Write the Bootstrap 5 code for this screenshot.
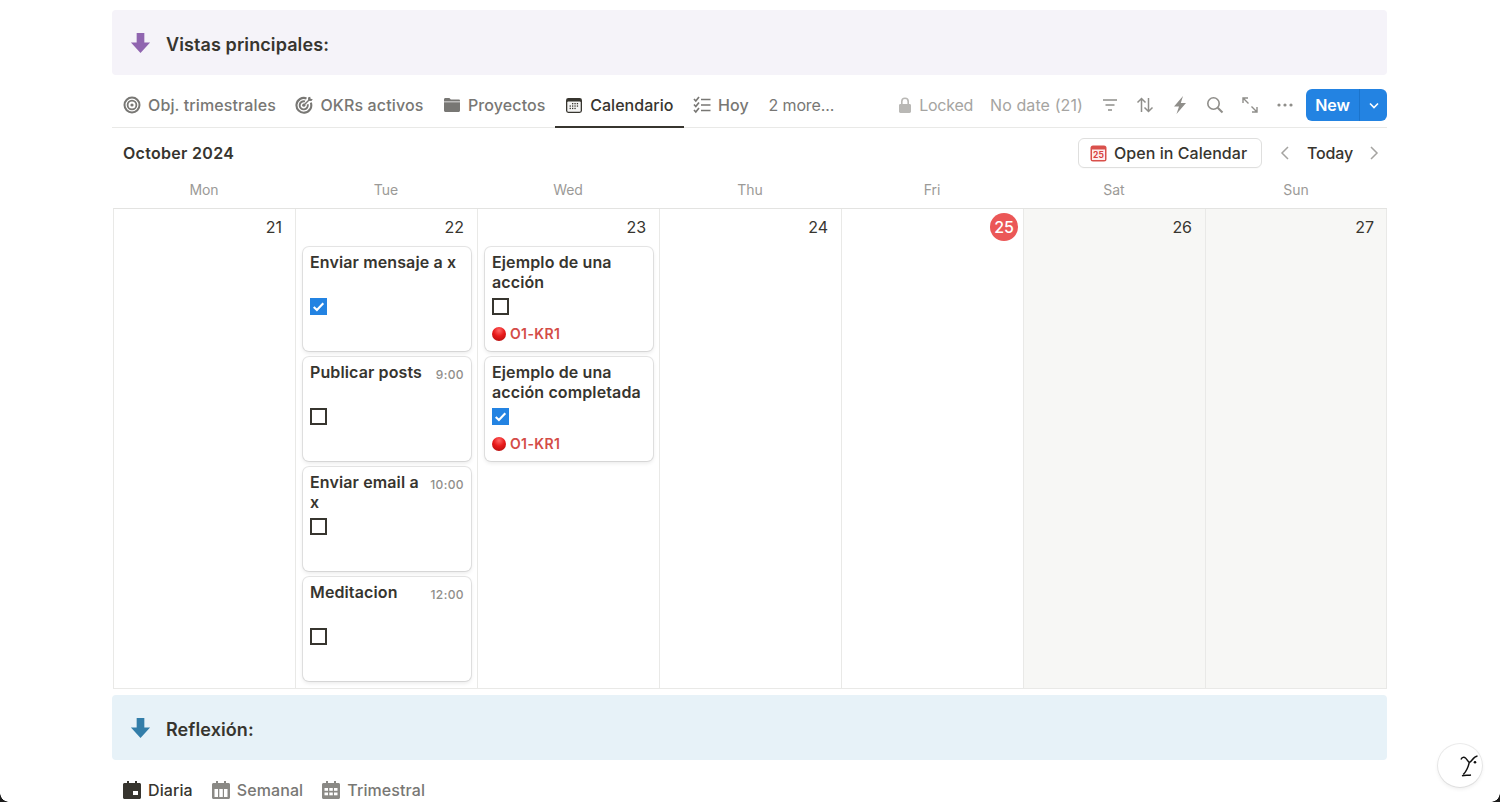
<!DOCTYPE html>
<html lang="es">
<head>
<meta charset="utf-8">
<title>Calendario</title>
<link href="https://cdn.jsdelivr.net/npm/bootstrap@5.3.0/dist/css/bootstrap.min.css" rel="stylesheet">
<style>
html,body{height:802px;overflow:hidden;background:#fff}
body{font-family:Inter,"Liberation Sans",sans-serif;color:#37352f;font-size:16px;letter-spacing:-.05px}
.page-wrap{width:1275px;margin-left:112px;padding-top:10px}
.callout-box{height:65px;border-radius:4px;padding-left:17px;font-size:18px;font-weight:600;gap:14px;letter-spacing:.1px}
.callout-box span{padding-top:3px}
.callout-purple{background:#f5f3f9}
.callout-blue{background:#e7f2f8;margin-top:6px}
.callout-box svg{width:23px;height:23px;flex:none}
.tabs-bar{height:53px;border-bottom:1px solid #e9e9e7;padding-left:11px}
.tab-item{height:45px;color:#787774;font-weight:500;gap:7px;font-size:16px;white-space:nowrap;margin-top:8px;padding-bottom:2px;letter-spacing:.12px}
.tab-item.sel{color:#37352f;box-shadow:inset 0 -2px 0 #37352f;margin-left:-10px;padding:0 10px 2px;margin-right:-10px;letter-spacing:.05px}
.tabs-left{gap:19.500px}
.tab-more{letter-spacing:-.1px}
.tab-item svg{width:18px;height:18px;flex:none}
.tools{gap:0;color:#a5a4a1;margin-top:8px}
.tools svg{width:18px;height:18px}
.tool-text{font-size:16px;font-weight:400;color:#a5a4a1;white-space:nowrap}
.new-group{width:81px;height:32px;background:#2383e2;border-radius:6px;color:#fff;font-weight:600;font-size:16px}
.new-main{width:54px;height:32px;border-right:1px solid #1b74cc}
.new-caret{width:27px}
.month-row{height:50px;padding-left:11px;padding-right:4px}
.month-title{font-size:16px;font-weight:600;letter-spacing:.3px}
.open-cal{height:30px;width:184px;border:1px solid #dfdfde;border-radius:6px;font-size:16px;font-weight:500;gap:7px;color:#37352f;background:#fff;box-shadow:0 1px 1px rgba(0,0,0,.02);letter-spacing:.05px;padding-left:11px}
.today-nav{margin-left:14px;gap:0}
.today-label{font-size:16px;font-weight:500;margin:0 12px 0 13px;letter-spacing:-.15px}
.week-row{display:grid;grid-template-columns:repeat(7,182px);padding-left:1px}
.day-row{display:grid;grid-template-columns:repeat(6,182px) 181px}
.week-name{height:30px;font-size:14px;color:#9b9a97;text-align:center;line-height:24px;width:182px}
.day-row{border-top:1px solid #e3e3e1;border-bottom:1px solid #e9e9e7;border-left:1px solid #e9e9e7;height:481px;width:1274px;margin-left:1px}
.day-col{border-right:1px solid #e9e9e7;padding:0 6px;min-width:0}
.day-col.weekend{background:#f7f7f5}
.day-num{height:38px;text-align:right;font-size:16px;line-height:37px;padding-right:7px;font-weight:400}
.day-col:last-child .day-num{padding-right:6px}
.day-today{background:#eb5757;color:#fff;border-radius:50%;width:28px;height:28px;line-height:28px;text-align:center;font-size:16px;font-weight:500;margin:4px 0 6px auto;display:block;padding:0;transform:translateX(1px)}
.today-cell{height:38px}
.task-card{height:104px;background:#fff;border-radius:6px;margin-bottom:6px;padding:5px 7px;box-shadow:0 0 0 1px rgba(15,15,15,.1),0 2px 4px rgba(15,15,15,.1);width:168px;margin-left:1px}
.task-head{height:40px;gap:6px}
.task-name{font-size:16px;font-weight:600;line-height:20px;letter-spacing:.12px}
.task-time{font-size:12px;font-weight:500;color:#8f8e8a;line-height:25px;margin-left:auto;white-space:nowrap;letter-spacing:.4px}
.check-box{width:17px;height:17px;border:2px solid #37352f;display:block;margin-top:6px;background:#fff}
.check-on{border:0;background:#2383e2}
.check-on svg{display:block;width:17px;height:17px}
.kr-tag{color:#d44c47;font-size:14px;font-weight:600;gap:4px;margin-top:9px;line-height:20px;letter-spacing:.35px}
.red-ball{width:14px;height:14px;border-radius:50%;background:radial-gradient(circle at 50% 25%,#f66 0,#e81a1a 45%,#a80e0e 100%);flex:none}
.bottom-tabs{padding-left:11px;gap:19px;margin-top:10px}
.bottom-tab{color:#787774;font-weight:500;gap:7px;font-size:16px;height:40px;letter-spacing:.1px}
.bottom-tab.sel{color:#37352f}
.bottom-tab svg{width:18px;height:18px}
.fab-help{position:fixed;left:1438px;top:744px;width:44px;height:43px;border-radius:50%;background:#fff;box-shadow:0 0 0 1px rgba(15,15,15,.08),0 2px 4px rgba(15,15,15,.08);padding-left:22px}
.corner-l,.corner-r{position:fixed;bottom:0;width:9px;height:9px}
.corner-l{left:0;background:radial-gradient(circle at 100% 0,transparent 8.500px,#1c1c1c 9px)}
.corner-r{right:0;background:radial-gradient(circle at 0 0,transparent 8.500px,#1c1c1c 9px)}
</style>
</head>
<body>
<div class="page-wrap">
  <div class="callout-box callout-purple d-flex align-items-center">
    <svg viewBox="0 0 24 24"><path fill="#9065b0" d="M8 2h8v10h6L12 23 2 12h6z"/></svg>
    <span>Vistas principales:</span>
  </div>

  <div class="tabs-bar d-flex justify-content-between">
    <div class="tabs-left d-flex">
      <div class="tab-item d-flex align-items-center"><svg viewBox="0 0 18 18" fill="none" stroke="#787774"><circle cx="9" cy="9" r="7.500" stroke-width="2"/><circle cx="9" cy="9" r="4.400" stroke-width="1.800"/><circle cx="9" cy="9" r="1.600" fill="#787774" stroke="none"/></svg>Obj. trimestrales</div>
      <div class="tab-item d-flex align-items-center"><svg viewBox="0 0 18 18" fill="none" stroke="#787774"><path d="M11.500 2.400A7.400 7.400 0 1 0 15.800 6.700" stroke-width="2.100"/><path d="M10 5.400A4.100 4.100 0 1 0 12.700 8.200" stroke-width="1.900"/><circle cx="8.800" cy="9.200" r="1.600" fill="#787774" stroke="none"/><path d="M9 9l6-6" stroke-width="1.500"/><path d="M13 1.600l.2 3.200 3.200.2 1.400-1.800-2.200-.4-.4-2z" fill="#787774" stroke="none"/></svg>OKRs activos</div>
      <div class="tab-item d-flex align-items-center"><svg viewBox="0 0 18 18" fill="#787774"><path d="M1 3.500C1 2.700 1.600 2 2.400 2h4l1.400 1.600H15.800c.7 0 1.200.5 1.200 1.200V5.400H1z"/><path d="M1 6.300h16v8.200c0 .9-.7 1.500-1.500 1.500h-13C1.700 16 1 15.400 1 14.500z"/></svg>Proyectos</div>
      <div class="tab-item sel d-flex align-items-center"><svg viewBox="0 0 18 18"><rect x="1" y="2" width="16" height="15" rx="2.400" fill="#37352f"/><rect x="2.300" y="5.400" width="13.400" height="10.300" rx="1" fill="#f4f4f3"/><g fill="#37352f"><rect x="7" y="7" width="1.300" height="1.300"/><rect x="9.400" y="7" width="1.300" height="1.300"/><rect x="11.800" y="7" width="1.300" height="1.300"/><rect x="4.600" y="9.400" width="1.300" height="1.300"/><rect x="7" y="9.400" width="1.300" height="1.300"/><rect x="9.400" y="9.400" width="1.300" height="1.300"/><rect x="11.800" y="9.400" width="1.300" height="1.300"/><rect x="4.600" y="11.800" width="1.300" height="1.300"/><rect x="7" y="11.800" width="1.300" height="1.300"/><rect x="9.400" y="11.800" width="1.300" height="1.300"/></g></svg>Calendario</div>
      <div class="tab-item d-flex align-items-center"><svg viewBox="0 0 18 18" fill="none" stroke="#787774" stroke-width="1.700"><path d="M1 3l1.800 2L6 1M1 8.500l1.800 2L6 6.500M1 14l1.800 2L6 12"/><path d="M8 3.500h9.500M8 9h9.500M8 14.500h9.500"/></svg>Hoy</div>
      <div class="tab-item tab-more d-flex align-items-center fw-normal">2 more...</div>
    </div>
    <div class="tools d-flex align-items-center">
      <svg style="width:14px;height:16px;margin-right:7px" viewBox="0 0 14 16"><path fill="#b9b8b5" d="M3 7V4.500a4 4 0 0 1 8 0V7h.600c.800 0 1.400.600 1.400 1.400v6.200c0 .800-.600 1.400-1.400 1.400H2.400C1.600 16 1 15.400 1 14.600V8.400C1 7.600 1.600 7 2.400 7zm1.600 0h4.800V4.500a2.400 2.400 0 0 0-4.800 0z"/></svg>
      <span class="tool-text" style="margin-right:17px;letter-spacing:-.25px">Locked</span>
      <span class="tool-text" style="margin-right:18px;letter-spacing:.1px">No date (21)</span>
      <svg style="margin-right:17px" viewBox="0 0 18 18" fill="none" stroke="#8f8e8a" stroke-width="1.500"><path d="M2 4h14M4.500 9h9M7 14h4"/></svg>
      <svg style="margin-right:17px" viewBox="0 0 18 18" fill="none" stroke="#8f8e8a" stroke-width="1.500"><path d="M5.500 16V2.500M1.500 6.500l4-4 4 4M12.500 2v13.500M8.500 11.500l4 4 4-4"/></svg>
      <svg style="margin-right:17px" viewBox="0 0 18 18"><path fill="#8f8e8a" d="M12 0L3 10.500h5L5.500 18l9.500-11H9.800z"/></svg>
      <svg style="margin-right:17px" viewBox="0 0 18 18" fill="none" stroke="#8f8e8a" stroke-width="1.600"><circle cx="7.500" cy="7.500" r="5.700"/><path d="M11.700 11.700L16.500 16.500" stroke-width="2"/></svg>
      <svg style="margin-right:17px" viewBox="0 0 18 18" fill="none" stroke="#8f8e8a" stroke-width="1.400"><path d="M2 2l5.500 5.500M2 7V2h5M16 16l-5.500-5.500M16 11v5h-5"/></svg>
      <svg style="margin-right:12px" viewBox="0 0 18 18"><g fill="#8f8e8a"><circle cx="3" cy="9" r="1.600"/><circle cx="9" cy="9" r="1.600"/><circle cx="15" cy="9" r="1.600"/></g></svg>
      <div class="new-group d-flex align-items-center">
        <div class="new-main d-flex align-items-center justify-content-center">New</div>
        <div class="new-caret d-flex align-items-center justify-content-center"><svg style="width:12px;height:12px" viewBox="0 0 12 12" fill="none" stroke="#fff" stroke-width="1.600"><path d="M2 4.500l4 4 4-4"/></svg></div>
      </div>
    </div>
  </div>

  <div class="month-row d-flex align-items-center justify-content-between">
    <div class="month-title">October 2024</div>
    <div class="d-flex align-items-center">
      <div class="open-cal d-flex align-items-center">
        <svg width="17" height="17" viewBox="0 0 17 17"><rect x=".5" y=".5" width="16" height="16" rx="2.500" fill="#d9504b"/><rect x="2" y="4.500" width="13" height="10.500" fill="#fdeeed"/><text x="8.500" y="13" font-family="Inter,sans-serif" font-size="8.500" font-weight="700" fill="#d9443f" text-anchor="middle">25</text></svg>
        Open in Calendar
      </div>
      <div class="today-nav d-flex align-items-center">
        <svg width="18" height="18" viewBox="0 0 18 18" fill="none" stroke="#a5a4a1" stroke-width="1.500"><path d="M12 3L6 9l6 6"/></svg>
        <span class="today-label">Today</span>
        <svg width="18" height="18" viewBox="0 0 18 18" fill="none" stroke="#a5a4a1" stroke-width="1.500"><path d="M6 3l6 6-6 6"/></svg>
      </div>
    </div>
  </div>

  <div class="week-row">
    <div class="week-name">Mon</div><div class="week-name">Tue</div><div class="week-name">Wed</div><div class="week-name">Thu</div><div class="week-name">Fri</div><div class="week-name">Sat</div><div class="week-name">Sun</div>
  </div>

  <div class="day-row">
    <div class="day-col"><div class="day-num">21</div></div>
    <div class="day-col">
      <div class="day-num">22</div>
      <div class="task-card">
        <div class="task-head d-flex"><div class="task-name">Enviar mensaje a x</div></div>
        <span class="check-box check-on"><svg viewBox="0 0 16 16" fill="none" stroke="#fff" stroke-width="2"><path d="M3.500 8.500l3 2.800 6-6.300"/></svg></span>
      </div>
      <div class="task-card">
        <div class="task-head d-flex"><div class="task-name">Publicar posts</div><div class="task-time">9:00</div></div>
        <span class="check-box"></span>
      </div>
      <div class="task-card">
        <div class="task-head d-flex"><div class="task-name">Enviar email a x</div><div class="task-time">10:00</div></div>
        <span class="check-box"></span>
      </div>
      <div class="task-card">
        <div class="task-head d-flex"><div class="task-name">Meditacion</div><div class="task-time">12:00</div></div>
        <span class="check-box"></span>
      </div>
    </div>
    <div class="day-col">
      <div class="day-num">23</div>
      <div class="task-card">
        <div class="task-head d-flex"><div class="task-name">Ejemplo de una acción</div></div>
        <span class="check-box"></span>
        <div class="kr-tag d-flex align-items-center"><span class="red-ball"></span>O1-KR1</div>
      </div>
      <div class="task-card">
        <div class="task-head d-flex"><div class="task-name">Ejemplo de una acción completada</div></div>
        <span class="check-box check-on"><svg viewBox="0 0 16 16" fill="none" stroke="#fff" stroke-width="2"><path d="M3.500 8.500l3 2.800 6-6.300"/></svg></span>
        <div class="kr-tag d-flex align-items-center"><span class="red-ball"></span>O1-KR1</div>
      </div>
    </div>
    <div class="day-col"><div class="day-num">24</div></div>
    <div class="day-col"><div class="today-cell"><span class="day-today">25</span></div></div>
    <div class="day-col weekend"><div class="day-num">26</div></div>
    <div class="day-col weekend"><div class="day-num">27</div></div>
  </div>

  <div class="callout-box callout-blue d-flex align-items-center">
    <svg viewBox="0 0 24 24"><path fill="#337ea9" d="M8 2h8v10h6L12 23 2 12h6z"/></svg>
    <span>Reflexión:</span>
  </div>

  <div class="bottom-tabs d-flex">
    <div class="bottom-tab sel d-flex align-items-center"><svg viewBox="0 0 18 18"><path fill="#37352f" d="M4 0h2v2h6V0h2v2h2.500c.800 0 1.500.700 1.500 1.500V16.500c0 .800-.700 1.500-1.500 1.500h-15C.700 18 0 17.300 0 16.500V3.500C0 2.700.700 2 1.500 2H4z"/><rect x="10" y="10" width="5" height="4" fill="#fff"/></svg>Diaria</div>
    <div class="bottom-tab d-flex align-items-center"><svg viewBox="0 0 18 18"><path fill="#8a8985" d="M4 0h2v2h6V0h2v2h2.500c.800 0 1.500.700 1.500 1.500V16.500c0 .800-.700 1.500-1.500 1.500h-15C.700 18 0 17.300 0 16.500V3.500C0 2.700.700 2 1.500 2H4z"/><g fill="#fff"><rect x="2.500" y="8" width="3.500" height="8"/><rect x="7.300" y="8" width="3.500" height="8"/><rect x="12" y="8" width="3.500" height="8"/></g></svg>Semanal</div>
    <div class="bottom-tab d-flex align-items-center"><svg viewBox="0 0 18 18"><path fill="#8a8985" d="M4 0h2v2h6V0h2v2h2.500c.800 0 1.500.700 1.500 1.500V16.500c0 .800-.700 1.500-1.500 1.500h-15C.700 18 0 17.300 0 16.500V3.500C0 2.700.700 2 1.500 2H4z"/><g fill="#fff"><rect x="2.500" y="7" width="3.500" height="2.800"/><rect x="7.300" y="7" width="3.500" height="2.800"/><rect x="12" y="7" width="3.500" height="2.800"/><rect x="2.500" y="11.500" width="3.500" height="2.800"/><rect x="7.300" y="11.500" width="3.500" height="2.800"/><rect x="12" y="11.500" width="3.500" height="2.800"/></g></svg>Trimestral</div>
  </div>
</div>

<div class="fab-help d-flex align-items-center">
  <svg width="19" height="22" viewBox="0 0 19 22" fill="none" stroke="#111" stroke-width="1.500"><path d="M1 4.500C2 2 4 1.800 5.500 3S8 7 9.300 7.300C11.500 7.500 13 1.500 17.500 1"/><path d="M9.300 7.300C8.500 11 6.500 16 3.300 19.500"/><path d="M2 20.800c3-1 6-.2 9-.8"/><circle cx="15" cy="7.300" r="1.300" fill="#111" stroke="none"/></svg>
</div>
<div class="corner-l"></div>
<div class="corner-r"></div>
<script src="https://cdn.jsdelivr.net/npm/bootstrap@5.3.0/dist/js/bootstrap.bundle.min.js"></script>
</body>
</html>
